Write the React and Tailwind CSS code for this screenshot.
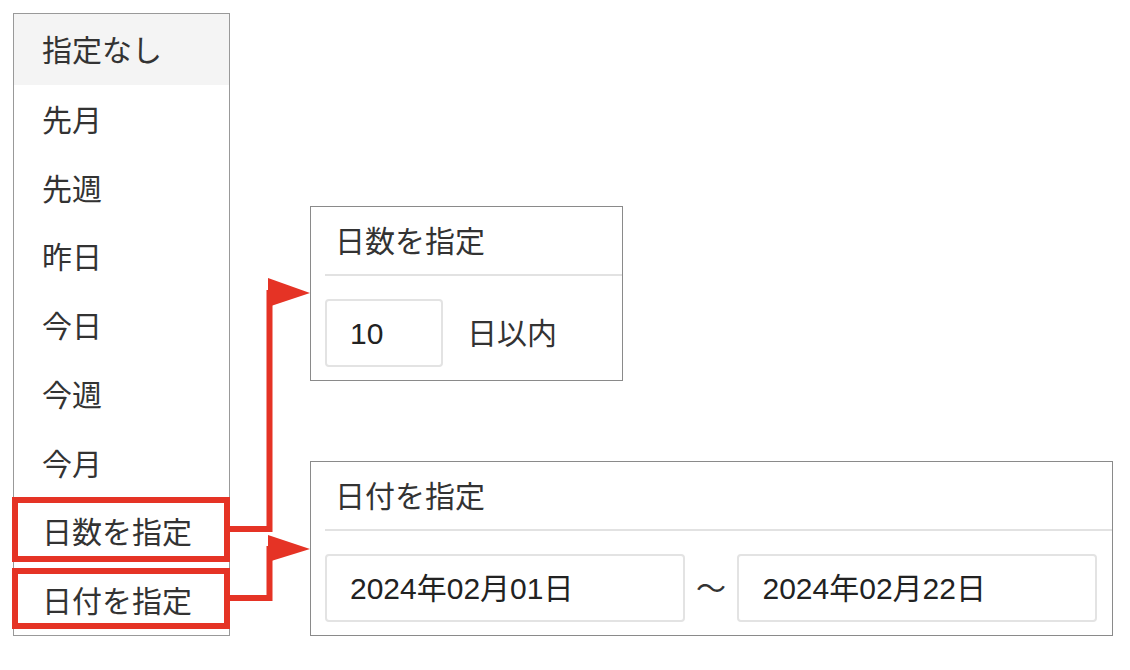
import React from 'react';

const items = ['指定なし', '先月', '先週', '昨日', '今日', '今週', '今月', '日数を指定', '日付を指定'];

const font = { fontFamily: '"Liberation Sans", "Noto Sans CJK JP", sans-serif' };

function Panel({ title, width, children }) {
  return (
    <div className={`border border-[#8a8a8a] bg-white ${width}`}>
      <div className="h-[67px] flex items-center pl-[24px] pt-[1px] text-[30px] text-[#333]">{title}</div>
      <div className="ml-[14px] h-[2px] bg-[#e2e2e2]" />
      <div className="flex items-center pt-[23px] pb-[13px] pl-[14px] pr-[15px]">{children}</div>
    </div>
  );
}

function Field({ value, width }) {
  return (
    <div className={`h-[68px] ${width} border-2 border-[#e3e3e3] rounded-[4px] flex items-center pl-[23px] pt-[1px] text-[30px] text-[#222]`}>
      {value}
    </div>
  );
}

export default function App() {
  return (
    <div className="relative w-[1130px] h-[670px] bg-white overflow-hidden" style={font}>
      <div className="flex pt-[13px] pl-[13px] gap-[80px]">
        {/* Option list */}
        <div className="w-[217px] border border-[#999] flex flex-col">
          {items.map((label, i) => (
            <div
              key={label}
              className={`flex items-center pl-[28px] pt-[2px] text-[30px] text-[#333] ${i === 0 ? 'h-[71px] bg-[#f4f4f4]' : 'h-[68.75px] bg-white'}`}
            >
              {label}
            </div>
          ))}
        </div>

        {/* Detail panels */}
        <div className="flex flex-col gap-[80px] pt-[193px]">
          <Panel title="日数を指定" width="w-[313px]">
            <Field value="10" width="w-[118px]" />
            <span className="ml-[24px] pt-[1px] text-[30px] text-[#333]">日以内</span>
          </Panel>
          <Panel title="日付を指定" width="w-[803px]">
            <Field value="2024年02月01日" width="w-[360px]" />
            <span className="w-[53px] text-center text-[30px] text-[#333]">〜</span>
            <Field value="2024年02月22日" width="w-[360px]" />
          </Panel>
        </div>
      </div>

      {/* Annotation highlights */}
      <div className="absolute left-[12px] top-[497px] w-[218px] h-[65px] border-[6px] border-[#e53325]" />
      <div className="absolute left-[12px] top-[568px] w-[218px] h-[61px] border-[6px] border-[#e53325]" />
      <svg className="absolute left-0 top-0" width="1130" height="670" viewBox="0 0 1130 670">
        <polyline points="230,529 269.5,529 269.5,290" fill="none" stroke="#e53325" strokeWidth="6" />
        <polygon points="268,278 310,293 268,307" fill="#e53325" />
        <polyline points="230,598 269.5,598 269.5,546" fill="none" stroke="#e53325" strokeWidth="6" />
        <polygon points="268,535 310,549 268,562" fill="#e53325" />
      </svg>
    </div>
  );
}
